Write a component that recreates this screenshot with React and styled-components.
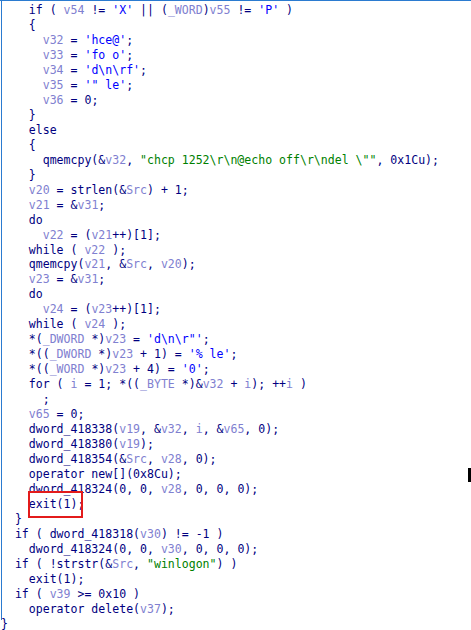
import React from "react";
import styled, { createGlobalStyle } from "styled-components";

const GlobalStyle = createGlobalStyle`
  html, body { margin: 0; padding: 0; background: #ffffff; }
  #root { width: 471px; height: 630px; }
`;

const Window = styled.div`
  position: relative;
  width: 471px;
  height: 630px;
  overflow: hidden;
  background: #ffffff;
  border-top: 1px solid #2b7bd0;
  box-sizing: border-box;
`;

const Pane = styled.div`
  height: 619px;
  border-left: 1px solid #2b7bd0;
  margin-left: 1px;
  box-sizing: border-box;
`;

const Code = styled.div`
  padding-top: 2px;
  margin-left: -1px;
  font-family: "DejaVu Sans Mono", "Liberation Mono", monospace;
  font-size: 11.55px;
  line-height: 14.97px;
  color: #000080;
  white-space: pre;
`;

const Line = styled.div`
  height: 14.97px;
`;

const colors = {
  plain: "#000080",
  str: "#008000",
  chr: "#0000ff",
  var: "#8080d0",
};

const Tok = styled.span`
  color: ${(p) => colors[p.$kind]};
`;

const Marked = styled.span`
  position: relative;
  &::after {
    content: "";
    position: absolute;
    box-sizing: border-box;
    left: -1px;
    right: 1px;
    top: -6px;
    height: 27px;
    border: 2px solid #e31b1b;
  }
`;

const Caret = styled.div`
  position: absolute;
  left: 468px;
  top: 467px;
  width: 3px;
  height: 14px;
  background: #000000;
`;

const re = /("(?:[^"\\]|\\.)*")|('(?:[^'\\]|\\.)*')|\b(v\d+|i|Src|_WORD|_DWORD|_BYTE)\b|([A-Za-z_]\w*|[^"'A-Za-z_])/g;

function tokenize(text) {
  const out = [];
  let m;
  re.lastIndex = 0;
  while ((m = re.exec(text))) {
    let kind = "plain";
    if (m[1]) kind = "str";
    else if (m[2]) kind = "chr";
    else if (m[3]) kind = "var";
    const last = out[out.length - 1];
    if (last && last.kind === kind) last.text += m[0];
    else out.push({ kind, text: m[0] });
  }
  return out;
}

const lines = [
  "    if ( v54 != 'X' || (_WORD)v55 != 'P' )",
  "    {",
  "      v32 = 'hce@';",
  "      v33 = 'fo o';",
  "      v34 = 'd\\n\\rf';",
  "      v35 = '\" le';",
  "      v36 = 0;",
  "    }",
  "    else",
  "    {",
  "      qmemcpy(&v32, \"chcp 1252\\r\\n@echo off\\r\\ndel \\\"\", 0x1Cu);",
  "    }",
  "    v20 = strlen(&Src) + 1;",
  "    v21 = &v31;",
  "    do",
  "      v22 = (v21++)[1];",
  "    while ( v22 );",
  "    qmemcpy(v21, &Src, v20);",
  "    v23 = &v31;",
  "    do",
  "      v24 = (v23++)[1];",
  "    while ( v24 );",
  "    *(_DWORD *)v23 = 'd\\n\\r\"';",
  "    *((_DWORD *)v23 + 1) = '% le';",
  "    *((_WORD *)v23 + 4) = '0';",
  "    for ( i = 1; *((_BYTE *)&v32 + i); ++i )",
  "      ;",
  "    v65 = 0;",
  "    dword_418338(v19, &v32, i, &v65, 0);",
  "    dword_418380(v19);",
  "    dword_418354(&Src, v28, 0);",
  "    operator new[](0x8Cu);",
  "    dword_418324(0, 0, v28, 0, 0, 0);",
  "    @@exit(1);",
  "  }",
  "  if ( dword_418318(v30) != -1 )",
  "    dword_418324(0, 0, v30, 0, 0, 0);",
  "  if ( !strstr(&Src, \"winlogon\") )",
  "    exit(1);",
  "  if ( v39 >= 0x10 )",
  "    operator delete(v37);",
  "}",
];

function Tokens({ text }) {
  return tokenize(text).map((t, i) => (
    <Tok key={i} $kind={t.kind}>
      {t.text}
    </Tok>
  ));
}

function CodeLine({ text }) {
  const idx = text.indexOf("@@");
  if (idx >= 0) {
    const lead = text.slice(0, idx);
    const rest = text.slice(idx + 2);
    return (
      <Line>
        {lead}
        <Marked>
          <Tokens text={rest} />
        </Marked>
      </Line>
    );
  }
  return (
    <Line>
      <Tokens text={text} />
    </Line>
  );
}

export default function App() {
  return (
    <>
      <GlobalStyle />
      <Window>
        <Pane>
          <Code>
            {lines.map((l, i) => (
              <CodeLine key={i} text={l} />
            ))}
          </Code>
        </Pane>
        <Caret />
      </Window>
    </>
  );
}
